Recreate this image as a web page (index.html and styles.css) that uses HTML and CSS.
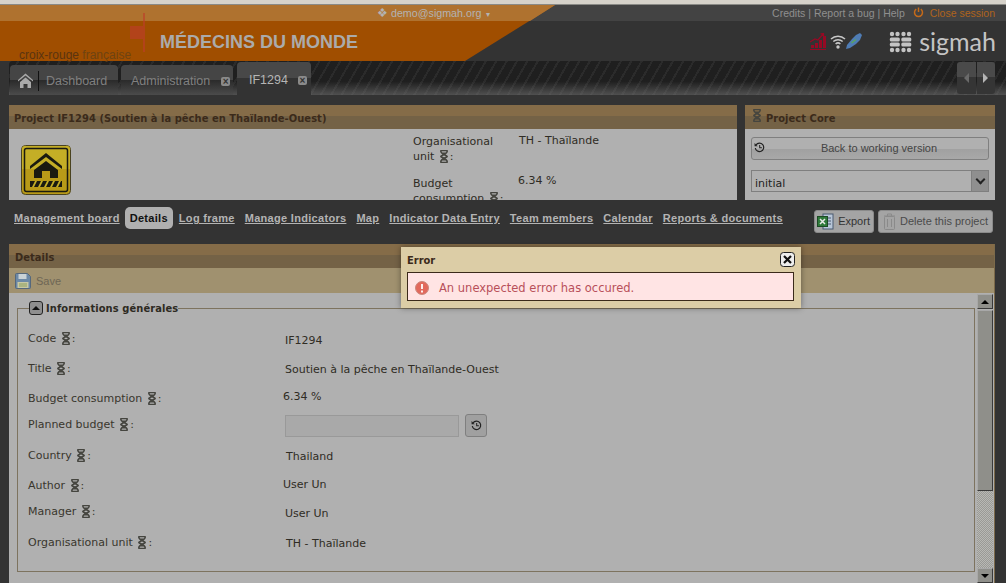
FILE: index.html
```html
<!DOCTYPE html>
<html lang="en"><head>
<meta charset="utf-8">
<title>Sigmah - IF1294</title>
<link rel="stylesheet" href="styles.css">
</head><body>

<svg class="defs" width="0" height="0">
	<symbol id="dna" viewBox="0 0 9 12">
		<path d="M1 .5h7M1 11.500h7M1.500 1c0 3 6 4 6 5s-6 2-6 5M7.500 1c0 3-6 4-6 5s6 2 6 5M2.500 3h4M2.500 9h4" fill="none" stroke="#45453f" stroke-width="1.400"/>
	</symbol>
	<symbol id="history" viewBox="0 0 12 12">
		<path d="M2.200 3.200A4.600 4.600 0 1 1 1.400 6.500" fill="none" stroke="#222" stroke-width="1.300"/>
		<path d="M.6 1.200v3.400h3.400z" fill="#222"/>
		<path d="M6.200 3.400v3h2.400" fill="none" stroke="#222" stroke-width="1.100"/>
	</symbol>
</svg>

<div class="topstrip"></div>

<header class="masthead">
	<svg class="orange" width="560" height="56" viewBox="0 0 560 56">
		<path d="M0 0H555L465 56H0z" fill="#a04e00"/>
		<path d="M0 0H555L530 16H0z" fill="#a9671e"/>
		<path d="M130 21h13V8h2v39h-2V34h-13z" fill="#b2431a"/>
	</svg>
	<div class="topbar">
		<div class="user"><span class="user-icon">&#10070;</span> demo@sigmah.org <span class="caret">&#9662;</span></div>
		<div class="toplinks">Credits | Report a bug | Help
			<svg class="power" width="11" height="11" viewBox="0 0 11 11"><path d="M3.200 2.200a4 4 0 1 0 4.600 0M5.500 .5v4.500" fill="none" stroke="#c46a1a" stroke-width="1.500"/></svg>
			<span class="close-session">Close session</span></div>
	</div>
	<div class="brandrow">
		<div class="brand"><span class="croix">croix-rouge <span class="croix-light">française</span></span><span class="org">MÉDECINS DU MONDE</span></div>
		<div class="status">
			<svg width="16" height="17" viewBox="0 0 16 17"><path d="M0 16h16v1H0zM1 12h3v3H1zM5 10h3v5H5zM9 7h3v8H9zM13 3h3v12h-3z" fill="#960a24"/><path d="M0 9l5-3 3 1 5-6M10.500 .8L13.500 .5V3.500" fill="none" stroke="#960a24" stroke-width="1.200"/></svg>
			<svg class="wifi" width="16" height="16" viewBox="0 0 16 16"><path d="M1 6a10 10 0 0 1 14 0M3.300 8.500a7 7 0 0 1 9.400 0M5.600 11a3.500 3.500 0 0 1 4.800 0" fill="none" stroke="#c8c8c8" stroke-width="1.500"/><circle cx="8" cy="14" r="1.700" fill="#c8c8c8"/></svg>
			<svg width="16" height="16" viewBox="0 0 16 16"><path d="M0 16l1-4 5-6 4-4 4-2 2 2-2 5-4 4-6 4z" fill="#4f7cb4"/><path d="M5.500 10l4.500-3.500" stroke="#5aa85a" stroke-width="1.500"/></svg>
		</div>
		<div class="sigmah">
			<svg width="23" height="22" viewBox="0 0 23 22" fill="#c4c4c4">
				<circle cx="3" cy="3" r="2.200"/><circle cx="8.500" cy="3" r="2.200"/><circle cx="14.500" cy="3" r="2.200"/><circle cx="20" cy="3" r="2.200"/>
				<rect x=".8" y="6.500" width="10" height="4" rx="1.500"/><rect x="12.300" y="6.500" width="10" height="4" rx="1.500"/>
				<rect x=".8" y="11.500" width="10" height="4" rx="1.500"/><rect x="12.300" y="11.500" width="10" height="4" rx="1.500"/>
				<circle cx="3" cy="19" r="2.200"/><circle cx="8.500" cy="19" r="2.200"/><circle cx="14.500" cy="19" r="2.200"/><circle cx="20" cy="19" r="2.200"/>
			</svg>
			<span>sigmah</span>
		</div>
	</div>
</header>

<nav class="tabbar">
	<div class="tab tab-dash">
		<svg class="home" width="15" height="15" viewBox="0 0 15 15"><path d="M7.500 .5L15 7v1.500L7.500 2.500 0 8.500V7zM2 9l5.500-4.500L13 9v6H9.500v-4h-4v4H2z" fill="#a9a9a9"/></svg>
		<span class="tab-sep"></span>Dashboard
	</div>
	<div class="tab tab-admin">Administration <span class="tab-x">&#215;</span></div>
	<div class="tab tab-active">IF1294 <span class="tab-x">&#215;</span></div>
	<div class="tab-arrows">
		<span class="arrow"><i class="arrow-left"></i></span>
		<span class="arrow"><i class="arrow-right"></i></span>
	</div>
</nav>

<main class="content">
	<section class="top-panels">
		<div class="panel project">
			<h2 class="panel-title">Project IF1294 (Soutien à la pêche en Thaïlande-Ouest)</h2>
			<div class="project-body">
				<svg class="project-logo" width="50" height="50" viewBox="0 0 50 50">
					<rect x=".5" y=".5" width="49" height="49" rx="4" fill="#b89a18" stroke="#4a4320"/>
					<path d="M1 4a3 3 0 0 1 3-3h42a3 3 0 0 1 3 3v20H1z" fill="#c4ae26"/>
					<rect x="3.500" y="3.500" width="43" height="43" rx="2" fill="none" stroke="#1a1a10" stroke-width="1.500"/>
					<path d="M25 8L41 21v3L25 12 9 24v-3zM13 25l12-9 12 9v8H29v-7h-8v7h-8z" fill="#1a1a10"/>
					<path d="M9 36h32v6H9z" fill="#1a1a10"/>
					<path d="M11 42l3-6h2l-3 6zM17 42l3-6h2l-3 6zM23 42l3-6h2l-3 6zM29 42l3-6h2l-3 6zM35 42l3-6h2l-3 6z" fill="#c4ae26"/>
				</svg>
				<dl class="project-info">
					<dt>Organisational unit <svg class="dna"><use href="#dna"/></svg>:</dt>
					<dd>TH - Thaïlande</dd>
					<dt class="info-2">Budget consumption <svg class="dna"><use href="#dna"/></svg>:</dt>
					<dd class="info-2">6.34 %</dd>
				</dl>
			</div>
		</div>
		<div class="panel core">
			<h2 class="panel-title core-title"><svg class="dna dna-title"><use href="#dna"/></svg>Project Core</h2>
			<div class="core-body">
				<button class="btn btn-back"><svg width="11" height="11"><use href="#history"/></svg><span>Back to working version</span></button>
				<div class="combo"><span>initial</span><span class="combo-btn"><i></i></span></div>
			</div>
		</div>
	</section>

	<section class="subnav">
		<a>Management board</a>
		<a class="current">Details</a>
		<a>Log frame</a>
		<a>Manage Indicators</a>
		<a>Map</a>
		<a>Indicator Data Entry</a>
		<a>Team members</a>
		<a>Calendar</a>
		<a>Reports &amp; documents</a>
		<div class="subnav-actions">
			<button class="btn btn-action">
				<svg width="17" height="17" viewBox="0 0 17 17"><rect x="6" y="1" width="10" height="15" fill="#b8c6d8" stroke="#4a5a70"/><path d="M9 5h5M9 8h5M9 11h5" stroke="#4a5a70"/><rect x=".5" y="3.500" width="10" height="10" fill="#2f7a3a" stroke="#1c4a24"/><path d="M3 6l5 5M8 6l-5 5" stroke="#e8e8e8" stroke-width="1.500"/></svg>
				Export</button>
			<button class="btn btn-action btn-off">
				<svg width="11" height="17" viewBox="0 0 11 17"><rect x=".5" y="3.500" width="10" height="13" rx="1" fill="none" stroke="#8a8a8a"/><path d="M0 3h11M3.500 3V1h4v2M3.500 6v8M7.500 6v8" fill="none" stroke="#8a8a8a"/></svg>
				Delete this project</button>
		</div>
	</section>

	<section class="panel details">
		<h2 class="panel-title">Details</h2>
		<div class="toolbar">
			<svg width="16" height="16" viewBox="0 0 16 16"><path d="M.5 1.500a1 1 0 0 1 1-1h11l3 3v11a1 1 0 0 1-1 1h-13a1 1 0 0 1-1-1z" fill="#6c89a6" stroke="#55687c"/><rect x="3.500" y="1" width="8" height="5" fill="#c9d2d6"/><rect x="2.500" y="9" width="11" height="6" fill="#c8c8a4"/><path d="M4 11h8M4 13h8" stroke="#8da05c"/></svg>
			<span>Save</span>
		</div>
		<div class="details-body">
			<div class="details-scroll">
				<fieldset class="group">
					<legend><span class="collapse"><i></i></span>Informations générales</legend>
					<div class="fields">
						<div class="field f-code"><label>Code <svg class="dna"><use href="#dna"/></svg>:</label><span class="val">IF1294</span></div>
						<div class="field f-title"><label>Title <svg class="dna"><use href="#dna"/></svg>:</label><span class="val">Soutien à la pêche en Thaïlande-Ouest</span></div>
						<div class="field f-budget"><label>Budget consumption <svg class="dna"><use href="#dna"/></svg>:</label><span class="val">6.34 %</span></div>
						<div class="field f-planned"><label>Planned budget <svg class="dna"><use href="#dna"/></svg>:</label>
							<span class="val planned"><input class="input" type="text" disabled><button class="btn btn-hist"><svg width="11" height="11"><use href="#history"/></svg></button></span></div>
						<div class="field f-country"><label>Country <svg class="dna"><use href="#dna"/></svg>:</label><span class="val">Thailand</span></div>
						<div class="field f-author"><label>Author <svg class="dna"><use href="#dna"/></svg>:</label><span class="val">User Un</span></div>
						<div class="field f-manager"><label>Manager <svg class="dna"><use href="#dna"/></svg>:</label><span class="val">User Un</span></div>
						<div class="field f-org"><label>Organisational unit <svg class="dna"><use href="#dna"/></svg>:</label><span class="val">TH - Thaïlande</span></div>
					</div>
				</fieldset>
			</div>
			<div class="scrollbar">
				<span class="sb-btn"><i class="sb-up"></i></span>
				<span class="sb-thumb"></span>
				<span class="sb-track"></span>
				<span class="sb-btn"><i class="sb-down"></i></span>
			</div>
		</div>
	</section>
</main>

<div class="dialog">
	<div class="dialog-head">Error<svg class="dialog-close" width="15" height="15" viewBox="0 0 15 15"><rect x=".5" y=".5" width="14" height="14" rx="3" fill="#eee" stroke="#222"/><path d="M4 4l7 7M11 4l-7 7" stroke="#111" stroke-width="2.200"/></svg></div>
	<div class="dialog-msg">
		<svg width="14" height="14" viewBox="0 0 14 14"><circle cx="7" cy="7" r="6.500" fill="#e2695c" stroke="#c9897e"/><path d="M7 3v5M7 9.500v2" stroke="#fff" stroke-width="1.800"/></svg>
		<span>An unexpected error has occured.</span>
	</div>
</div>

</body></html>
```

FILE: styles.css
```css
html, body {
	height: 583px;
	overflow: hidden;
}

body {
	position: relative;
	margin: 0;
	background-color: #333;
	font-family: "DejaVu Sans", sans-serif;
	font-size: 11px;
	color: #2d2a22;
}

.defs {
	position: absolute;
}

.topstrip {
	height: 4px;
	background-color: #d6d2ca;
	border-bottom: 1px solid #8a8a86;
}

/* header */
.masthead {
	position: relative;
	height: 56px;
	background-color: #333;
}

.orange {
	position: absolute;
	left: 0;
	top: 0;
}

.topbar {
	position: relative;
	display: flex;
	height: 16px;
	align-items: center;
	padding-right: 11px;
	background-color: rgba(255, 255, 255, 0.08);
	font-family: "Liberation Sans", sans-serif;
	font-size: 10.500px;
	color: #8f8f8f;
}

.user {
	margin-left: 377px;
	color: #b3b3b3;
	font-size: 10.700px;
}

.user-icon {
	font-size: 12px;
}

.caret {
	margin-left: 2px;
	font-size: 8px;
}

.toplinks {
	margin-left: auto;
}

.power {
	margin: 0 3px 0 5px;
	vertical-align: -1px;
}

.close-session {
	color: #b0641c;
}

.brandrow {
	position: relative;
	display: flex;
	height: 40px;
}

.brand {
	position: relative;
	flex: 1;
}

.croix {
	position: absolute;
	left: 19px;
	top: 27px;
	font-family: "Liberation Sans", sans-serif;
	font-size: 12px;
	color: #5a3410;
}

.croix-light {
	color: #6e4312;
}

.org {
	position: absolute;
	left: 160px;
	top: 11px;
	font-family: "Liberation Sans", sans-serif;
	font-size: 18px;
	font-weight: bold;
	color: #ababab;
}

.status {
	display: flex;
	margin: 12px 27px 0 0;
	align-items: flex-start;
}

.wifi {
	margin-left: 4px;
}

.sigmah {
	display: flex;
	gap: 7px;
	margin: 10px 10px 0 0;
	align-items: flex-start;
	color: #c4c4c4;
	font-family: "Lato", sans-serif;
	font-size: 25px;
	line-height: 20px;
}

/* tabs */
.tabbar {
	display: flex;
	height: 34px;
	margin-left: 9px;
	padding-right: 11px;
	align-items: flex-end;
	border-radius: 4px 0 0 0;
	background:
		linear-gradient(to bottom, transparent 60%, rgba(120, 120, 120, 0.55) 100%),
		repeating-linear-gradient(120deg, #1f1f1f 0, #1f1f1f 7px, #2b2b2b 7px, #2b2b2b 9px);
	font-family: "Liberation Sans", sans-serif;
	font-size: 12.500px;
	color: #808080;
}

.tab {
	display: flex;
	height: 30px;
	align-items: center;
	margin-right: 4px;
	padding-top: 1px;
	box-sizing: border-box;
	border-radius: 4px 4px 0 0;
	background: linear-gradient(to bottom, #454545 0, #454545 15px, #2a2a2a 15px, #4b4b4b 100%);
}

.tab-dash {
	width: 108px;
	margin-left: 1px;
	margin-right: 3px;
	padding-left: 8px;
}

.home {
	margin-right: 5px;
}

.tab-sep {
	width: 1px;
	height: 20px;
	margin-right: 7px;
	background-color: #111;
}

.tab-admin {
	width: 112px;
	padding-left: 10px;
}

.tab-active {
	width: 74px;
	height: 33px;
	padding: 3px 0 0 12px;
	background: linear-gradient(to bottom, #484848 0, #484848 16px, #333 16px);
	color: #b5b5b5;
}

.tab-x {
	display: inline-block;
	width: 9px;
	height: 9px;
	margin: 1px 0 0 11px;
	border-radius: 2px;
	background-color: #8a8a8a;
	color: #333;
	font-size: 10px;
	font-weight: bold;
	line-height: 9px;
	text-align: center;
}

.tab-active .tab-x {
	margin-left: 10px;
}

.tab-arrows {
	display: flex;
	gap: 1px;
	width: 38px;
	height: 32px;
	margin: 0 0 1px auto;
	border-radius: 3px;
	overflow: hidden;
}

.arrow {
	display: flex;
	flex: 1;
	align-items: center;
	justify-content: center;
	background: linear-gradient(to bottom, #4a4a4a 0, #4a4a4a 15px, #353535 15px);
}

.arrow-left {
	border: 5px solid transparent;
	border-left: 0;
	border-right: 5px solid #6a6a6a;
}

.arrow-right {
	border: 5px solid transparent;
	border-right: 0;
	border-left: 5px solid #b5b5b5;
}

/* main */
.content {
	padding: 10px 11px 0 9px;
}

.top-panels {
	display: flex;
	gap: 8px;
	height: 95px;
}

.panel {
	background-color: #b0b0b0;
	overflow: hidden;
}

.panel-title {
	height: 24px;
	margin: 0;
	padding-left: 5px;
	background: linear-gradient(to bottom, #856c48 0, #856c48 45%, #746246 45%, #746246 100%);
	color: #3b2a1a;
	font-family: "DejaVu Sans Condensed", "DejaVu Sans", sans-serif;
	font-size: 11px;
	font-weight: bold;
	letter-spacing: 0.06px;
	line-height: 27px;
}

.project {
	width: 728px;
}

.project-body {
	display: flex;
	padding: 16px 0 0 12px;
}

.project-logo {
	flex: none;
}

.project-info {
	display: grid;
	grid-template-columns: 92px auto;
	grid-template-rows: 42px auto;
	margin: -12px 0 0 342px;
	line-height: 15px;
	color: #2f2c24;
}

.project-info dt {
	padding-top: 1px;
}

.project-info dd {
	margin: 0 0 0 14px;
	white-space: nowrap;
}

.project-info dd.info-2 {
	margin: -2px 0 0 13px;
}

.dna {
	width: 10px;
	height: 13px;
	margin: -2px 1px;
	vertical-align: -1px;
}

.core {
	width: 250px;
}

.core-title {
	position: relative;
	padding-left: 21px;
}

.dna-title {
	position: absolute;
	left: 6px;
	top: 6px;
}

.core-body {
	padding: 8px 6px;
}

.btn {
	border: 1px solid #7f7f7f;
	border-radius: 3px;
	background: linear-gradient(to bottom, #b0b0b0 0, #b0b0b0 50%, #a0a0a0 50%, #a8a8a8 100%);
	color: #444;
	font-family: "Liberation Sans", sans-serif;
	font-size: 11px;
	padding: 0;
}

.btn-back {
	display: flex;
	width: 238px;
	height: 23px;
	align-items: center;
	padding: 0 0 2px 2px;
}

.btn-back span {
	flex: 1;
	padding-left: 5px;
	text-align: center;
}

.combo {
	display: flex;
	height: 22px;
	margin-top: 10px;
	width: 238px;
	align-items: center;
	padding-left: 3px;
	box-sizing: border-box;
	border: 1px solid #7f7f7f;
	background-color: #b0b0b0;
	font-family: "DejaVu Sans", sans-serif;
	color: #222;
}

.combo span:first-child {
	flex: 1;
	padding-top: 4px;
}

.combo-btn {
	display: flex;
	width: 16px;
	height: 20px;
	align-items: center;
	justify-content: center;
	border-left: 1px solid #7f7f7f;
	background-color: #8f8f8f;
}

.combo-btn i {
	width: 5px;
	height: 5px;
	margin-top: -4px;
	border: solid #222;
	border-width: 0 2px 2px 0;
	transform: rotate(45deg);
}

/* sub navigation */
.subnav {
	display: flex;
	height: 44px;
	padding-left: 5px;
	align-items: center;
	font-family: "Liberation Sans", sans-serif;
	font-size: 11px;
	font-weight: bold;
	letter-spacing: 0.3px;
}

.subnav a {
	margin-right: 10px;
	margin-top: -8px;
	color: #b4b4b4;
	text-decoration: underline;
}

.subnav a.current {
	margin-left: -5px;
	margin-right: 6px;
	padding: 5px;
	border-radius: 5px;
	background-color: #b0b0b0;
	color: #111;
	text-decoration: none;
}

.subnav-actions {
	display: flex;
	gap: 4px;
	margin: -2px 2px 0 auto;
	letter-spacing: 0;
}

.btn-action {
	display: flex;
	gap: 4px;
	height: 23px;
	align-items: center;
	padding: 0 3px 0 2px;
	border-radius: 3px;
	border-color: #8a8a8a;
	background: #a4a4a4;
	color: #333;
	font-weight: normal;
}

.btn-off {
	gap: 5px;
	padding: 0 4px 0 5px;
	color: #4b4b4b;
}

/* details */
.details {
	height: 339px;
	border-right: 1px solid #7c6a4a;
}

.details .panel-title {
	padding-left: 6px;
}

.toolbar {
	display: flex;
	gap: 5px;
	height: 25px;
	padding-left: 6px;
	align-items: center;
	background-color: #a0916f;
	font-family: "Liberation Sans", sans-serif;
	font-size: 11px;
	color: #6e6655;
}

.details-body {
	display: flex;
	height: 290px;
}

.details-scroll {
	flex: 1;
	padding: 8px 2px 0 8px;
}

.group {
	height: 271px;
	margin: 0;
	padding: 0 0 0 10px;
	box-sizing: border-box;
	border: 1px solid #7d735f;
	font-family: "DejaVu Sans", sans-serif;
}

.group legend {
	display: flex;
	gap: 3px;
	margin-left: 1px;
	padding: 0;
	align-items: center;
	color: #2d2a22;
	font-family: "DejaVu Sans Condensed", "DejaVu Sans", sans-serif;
	font-weight: bold;
	letter-spacing: 0.1px;
}

.collapse {
	display: flex;
	width: 12px;
	height: 12px;
	align-items: center;
	justify-content: center;
	border: 1px solid #222;
	border-radius: 3px;
	background-color: #8f8f8f;
}

.collapse i {
	border: 4px solid transparent;
	border-top: 0;
	border-bottom: 4px solid #111;
}

.field {
	display: flex;
	color: #39362d;
}

.field label {
	width: 257px;
	flex: none;
	padding-top: 1px;
}

.val {
	color: #2f2c24;
}

.f-code { margin-top: 15px; height: 31px; }
.f-code label { padding-top: 2px; }
.f-code .val { padding-top: 4px; }
.f-title { height: 30px; }
.f-title .val { padding-top: 2px; }
.f-budget { height: 26px; }
.f-budget .val { margin: -1px 0 0 -2px; }
.f-planned { height: 31px; }
.f-country { height: 30px; }
.f-country .val { margin-left: 1px; padding-top: 2px; }
.f-author { height: 26px; }
.f-author .val { margin-left: -2px; }
.f-manager { height: 31px; }
.f-manager .val { padding-top: 3px; }
.f-org .val { margin-left: 1px; padding-top: 2px; }

.planned {
	display: flex;
	gap: 6px;
	margin-top: -3px;
	align-items: center;
	align-self: flex-start;
}

.input {
	width: 174px;
	height: 22px;
	padding: 0;
	box-sizing: border-box;
	border: 1px solid #999;
	background-color: #a9a9a9;
}

.btn-hist {
	display: flex;
	width: 22px;
	height: 23px;
	align-items: center;
	justify-content: center;
	background: #a0a0a0;
}

.scrollbar {
	display: flex;
	flex-direction: column;
	flex: none;
	width: 16px;
	margin: 1px 1px 0 0;
}

.sb-btn {
	display: flex;
	height: 15px;
	flex: none;
	align-items: center;
	justify-content: center;
	border: solid;
	border-width: 1px;
	border-color: #a8a8a8 #3a3a3a #3a3a3a #a8a8a8;
	background-color: #8f8f8a;
	box-sizing: border-box;
}

.sb-up {
	border: 4px solid transparent;
	border-top: 0;
	border-bottom: 4px solid #000;
}

.sb-down {
	border: 4px solid transparent;
	border-bottom: 0;
	border-top: 4px solid #000;
}

.sb-thumb {
	height: 181px;
	flex: none;
	margin-top: 1px;
	box-sizing: border-box;
	border: solid;
	border-width: 1px;
	border-color: #a8a8a8 #3a3a3a #3a3a3a #a8a8a8;
	background-color: #8f8f8a;
}

.sb-track {
	flex: 1;
	background: repeating-conic-gradient(#9a9a96 0 25%, #b8b8b4 0 50%) 0 0 / 2px 2px;
}

/* error dialog */
.dialog {
	position: absolute;
	left: 401px;
	top: 247px;
	width: 400px;
	height: 61px;
	padding: 0 7px 0 6px;
	box-sizing: border-box;
	background-color: #dccda6;
	box-shadow: 0 0 6px rgba(0, 0, 0, 0.4);
}

.dialog-head {
	position: relative;
	height: 25px;
	color: #3b2a1a;
	font-family: "DejaVu Sans Condensed", "DejaVu Sans", sans-serif;
	font-weight: bold;
	line-height: 27px;
}

.dialog-close {
	position: absolute;
	right: -1px;
	top: 5px;
}

.dialog-msg {
	display: flex;
	gap: 10px;
	height: 29px;
	padding: 3px 0 0 7px;
	align-items: center;
	box-sizing: border-box;
	border: 1px solid #3b2a1a;
	background-color: #ffe4e4;
	color: #b8505a;
	font-size: 11.500px;
}
```
